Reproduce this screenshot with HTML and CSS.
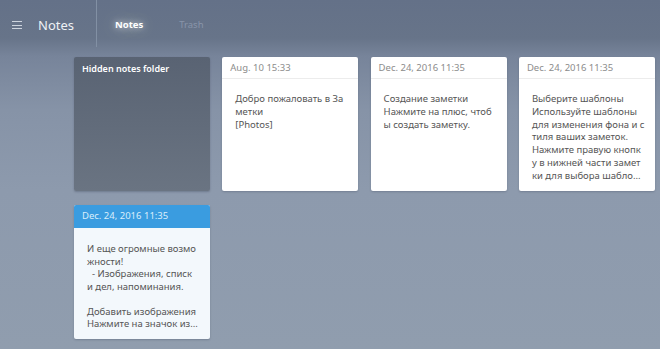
FILE: index.html
```html
<!DOCTYPE html>
<html>
<head>
<meta charset="utf-8">
<link rel="stylesheet" href="styles.css">
</head>
<body>
<header class="topbar">
  <div class="brand">
    <span class="burger"><i></i><i></i><i></i></span>
    <span class="app-title">Notes</span>
  </div>
  <nav class="tabs">
    <span class="tab active">Notes</span>
    <span class="tab">Trash</span>
  </nav>
</header>
<main class="grid">
  <div class="card folder">
    <div class="folder-title">Hidden notes folder</div>
  </div>
  <div class="card">
    <div class="card-date">Aug. 10 15:33</div>
    <div class="card-body">Добро пожаловать в За<br>метки<br>[Photos]</div>
  </div>
  <div class="card">
    <div class="card-date">Dec. 24, 2016 11:35</div>
    <div class="card-body">Создание заметки<br>Нажмите на плюс, чтоб<br>ы создать заметку.</div>
  </div>
  <div class="card">
    <div class="card-date">Dec. 24, 2016 11:35</div>
    <div class="card-body">Выберите шаблоны<br>Используйте шаблоны<br>для изменения фона и с<br>тиля ваших заметок.<br>Нажмите правую кнопк<br>у в нижней части замет<br>ки для выбора шабло...</div>
  </div>
  <div class="card selected">
    <div class="card-date">Dec. 24, 2016 11:35</div>
    <div class="card-body">И еще огромные возмо<br>жности!<br>&nbsp;&nbsp;- Изображения, списк<br>и дел, напоминания.<br><br>Добавить изображения<br>Нажмите на значок из...</div>
  </div>
</main>
</body>
</html>
```

FILE: styles.css
```css
* { box-sizing: border-box; }
html, body { margin: 0; padding: 0; }
body {
  width: 660px;
  height: 349px;
  overflow: hidden;
  font-family: "Noto Sans", "Open Sans", sans-serif;
  background: linear-gradient(to bottom, #647188 0px, #677489 38px, #77849a 56px, #8693a7 110px, #8d9aad 190px, #909dae 349px);
}
.topbar {
  height: 48px;
  display: flex;
  align-items: stretch;
}
.brand {
  width: 97px;
  display: flex;
  align-items: center;
  padding-left: 12px;
  padding-top: 4px;
  border-right: 1px solid #8290a4;
  height: 47px;
}
.burger {
  width: 10px;
  display: flex;
  flex-direction: column;
  gap: 2.5px;
  margin-right: 16px;
  margin-top: -1px;
}
.burger i {
  display: block;
  height: 1px;
  background: #cdd4de;
}
.app-title {
  color: #eef1f5;
  font-size: 13px;
  margin-top: -1px;
}
.tabs {
  display: flex;
  align-items: center;
  padding-left: 18px;
  padding-top: 3px;
  gap: 36px;
  height: 47px;
}
.tab {
  font-size: 9.5px;
  color: #8995aa;
  margin-top: -1px;
}
.tab.active {
  color: #ffffff;
  font-weight: 700;
  text-shadow: 0 0 6px rgba(255,255,255,0.7), 0 0 16px rgba(255,255,255,0.5);
}
.grid {
  display: grid;
  grid-template-columns: repeat(4, 136px);
  grid-auto-rows: 134px;
  column-gap: 12.3px;
  row-gap: 14px;
  padding: 9px 0 0 74px;
}
.card {
  background: #ffffff;
  border-radius: 2px;
  box-shadow: 0 1px 2px rgba(40,50,70,0.25);
  overflow: hidden;
}
.card-date {
  height: 22px;
  line-height: 21px;
  padding-left: 8px;
  font-size: 9.5px;
  color: #8c8c8c;
  border-bottom: 1px solid #ececec;
}
.card-body {
  padding: 14px 8px 0 13px;
  font-size: 9.5px;
  line-height: 12.8px;
  color: #555555;
  white-space: nowrap;
}
.folder {
  background: linear-gradient(to bottom, #596373, #6a7482);
  box-shadow: 0 1px 2px rgba(40,50,70,0.3);
}
.folder-title {
  color: #ffffff;
  font-size: 9px;
  font-weight: 600;
  padding: 5px 8px;
}
.selected {
  background: #f3f8fc;
}
.selected .card-date {
  background: #3a9ce0;
  color: #d9eefb;
  height: 23px;
  line-height: 22px;
  border-bottom: none;
}
.selected .card-body {
  padding-top: 15px;
  line-height: 12.5px;
}
```
